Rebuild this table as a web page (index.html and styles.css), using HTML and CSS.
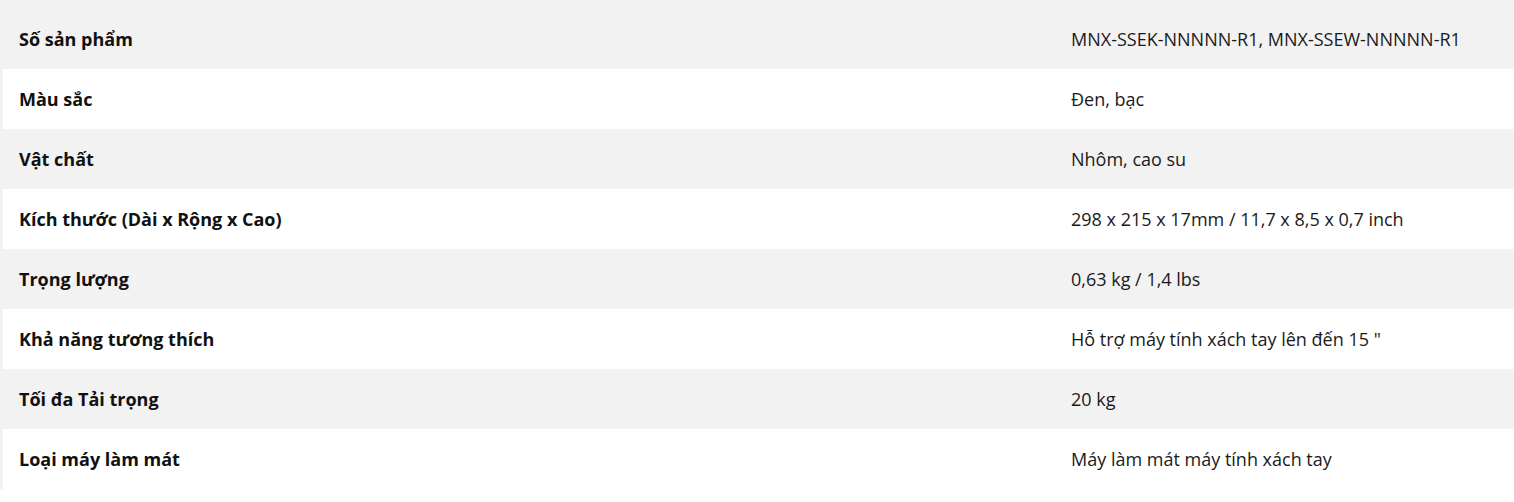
FILE: index.html
```html
<!DOCTYPE html>
<html lang="vi">
<head>
<meta charset="utf-8">
<link rel="stylesheet" href="styles.css">
</head>
<body>
<div class="specs">
  <div class="row"><div class="label">Số sản phẩm</div><div class="value">MNX-SSEK-NNNNN-R1, MNX-SSEW-NNNNN-R1</div></div>
  <div class="row"><div class="label">Màu sắc</div><div class="value">Đen, bạc</div></div>
  <div class="row"><div class="label">Vật chất</div><div class="value">Nhôm, cao su</div></div>
  <div class="row"><div class="label">Kích thước (Dài x Rộng x Cao)</div><div class="value">298 x 215 x 17mm / 11,7 x 8,5 x 0,7 inch</div></div>
  <div class="row"><div class="label">Trọng lượng</div><div class="value">0,63 kg / 1,4 lbs</div></div>
  <div class="row"><div class="label">Khả năng tương thích</div><div class="value">Hỗ trợ máy tính xách tay lên đến 15 "</div></div>
  <div class="row"><div class="label">Tối đa Tải trọng</div><div class="value">20 kg</div></div>
  <div class="row"><div class="label">Loại máy làm mát</div><div class="value">Máy làm mát máy tính xách tay</div></div>
</div>
</body>
</html>
```

FILE: styles.css
```css
html, body {
  margin: 0;
  padding: 0;
  background: #ffffff;
}
body {
  font-family: "Open Sans", "Noto Sans", sans-serif;
  font-size: 18px;
  color: #1a1a1a;
}
.specs {
  background: #f2f2f2;
  padding: 9px 0 0 3px;
}
.row {
  display: grid;
  grid-template-columns: 1052px 1fr;
  height: 60px;
  align-items: center;
}
.row:nth-child(even) {
  background: #ffffff;
}
.label {
  padding-left: 16px;
  font-weight: 700;
  color: #111111;
}
.value {
  padding-left: 16px;
}
```
